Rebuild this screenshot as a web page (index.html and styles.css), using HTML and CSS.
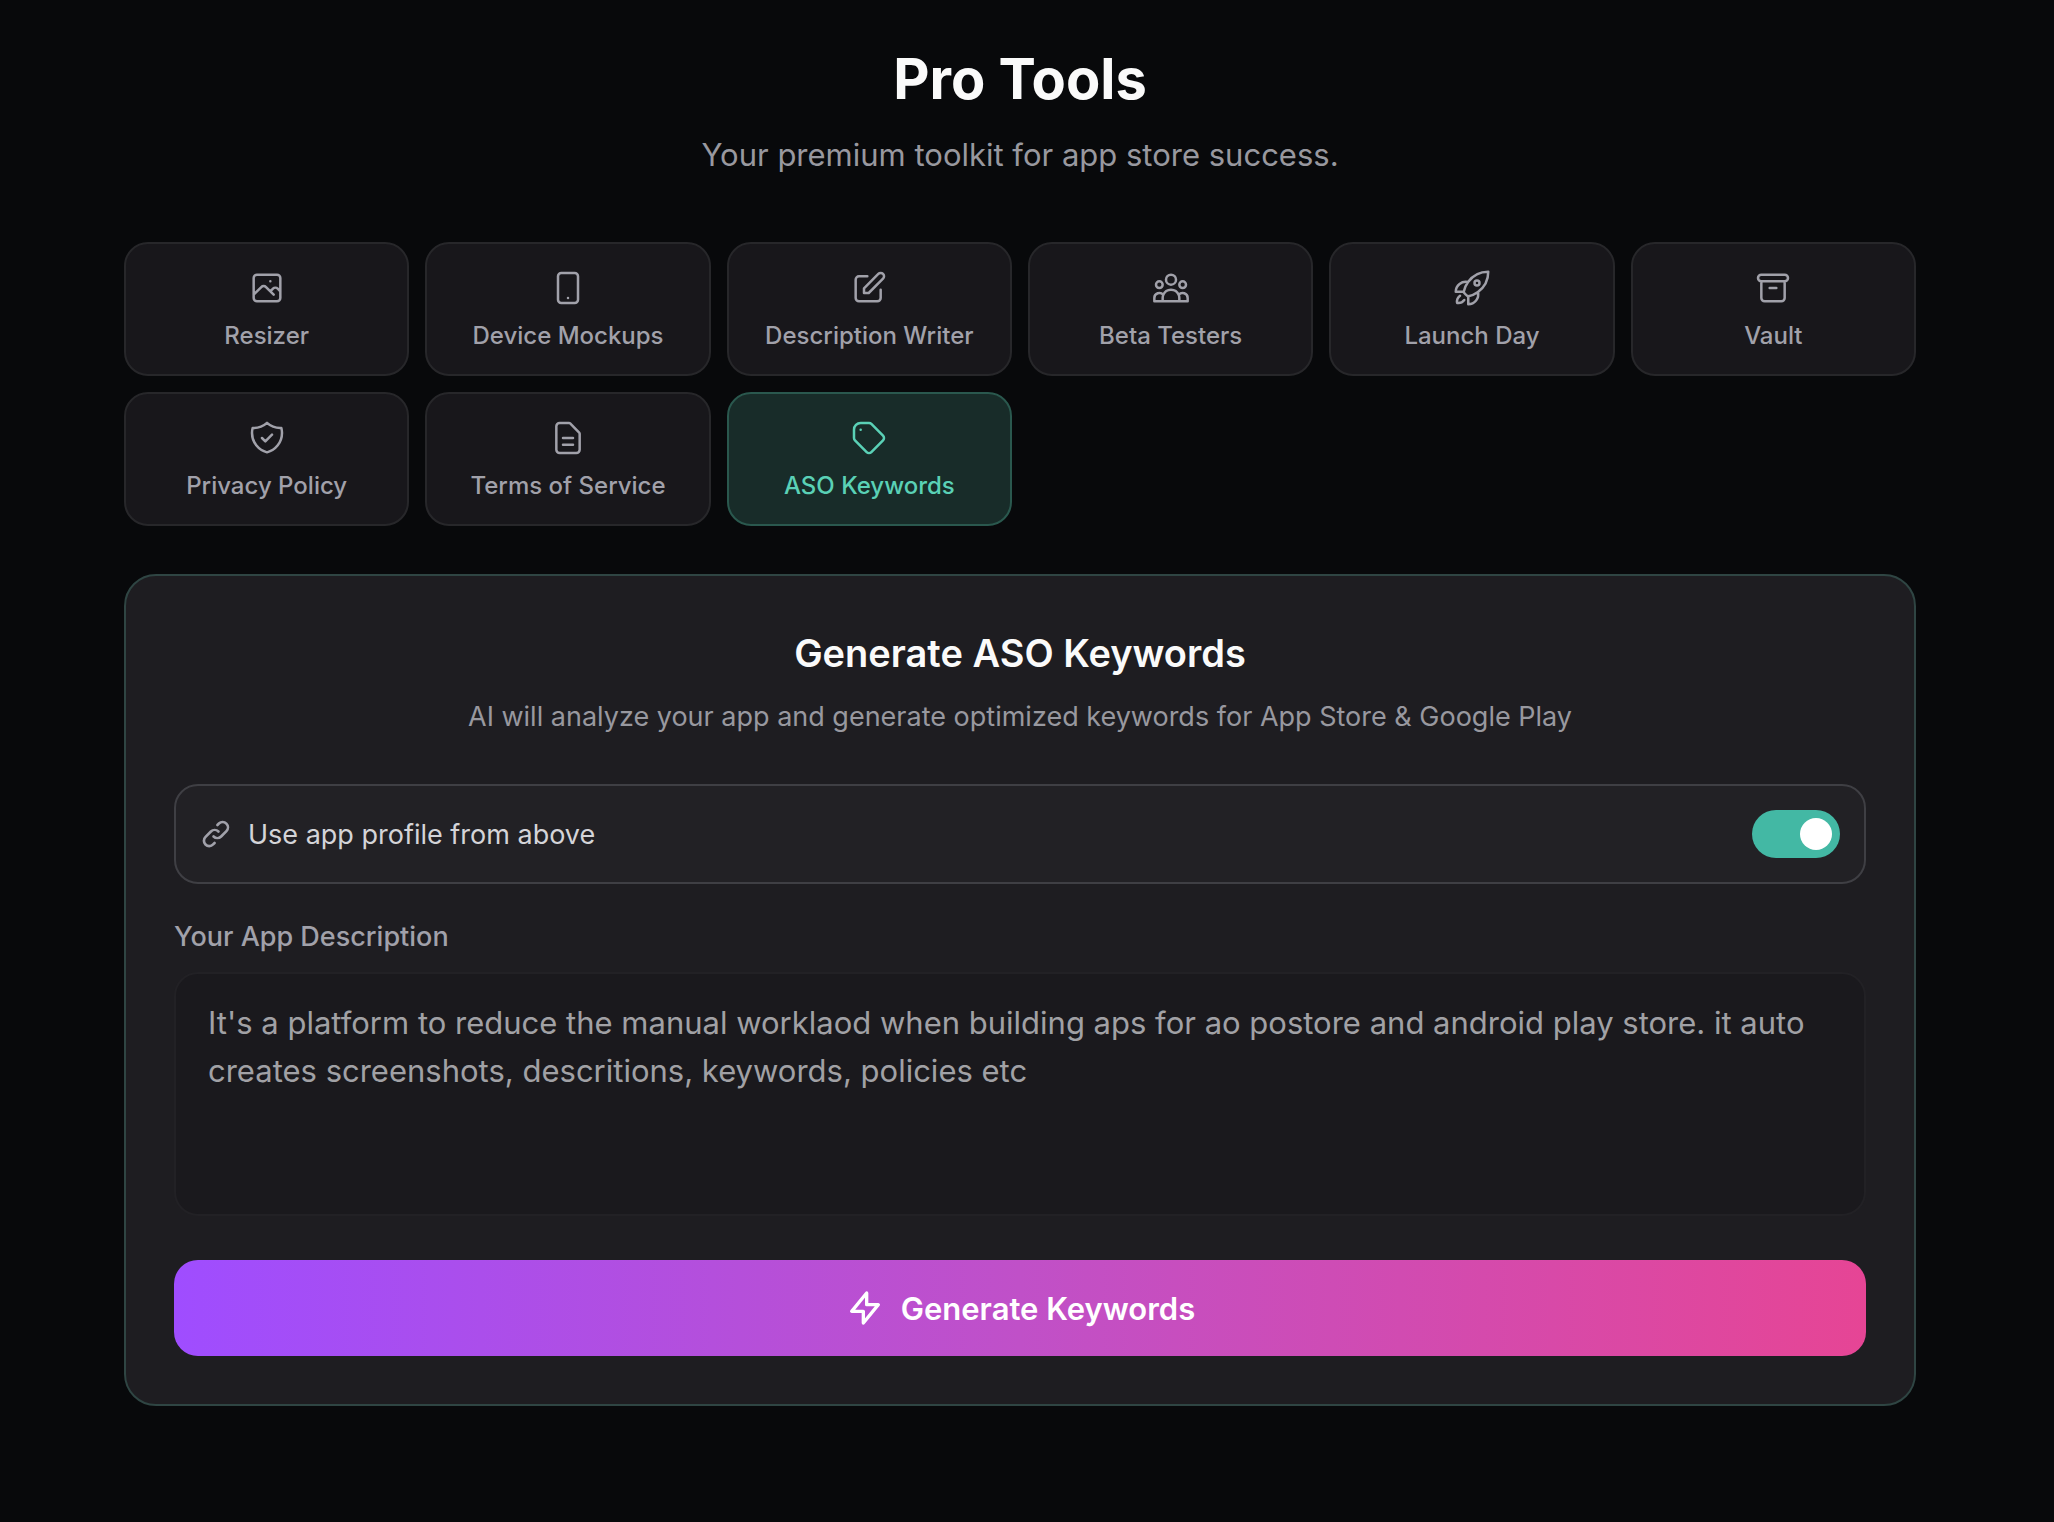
FILE: index.html
```
<!DOCTYPE html>
<html lang="en">
<head>
<meta charset="utf-8">
<meta name="viewport" content="width=device-width, initial-scale=1">
<title>Pro Tools</title>
<link rel="stylesheet" href="styles.css">
</head>
<body>
<main class="page">
  <header class="page-header">
    <h1 class="page-title">Pro Tools</h1>
    <p class="page-subtitle">Your premium toolkit for app store success.</p>
  </header>

  <nav class="tools" aria-label="Tools">
    <button class="tool" type="button">
      <svg class="icon" viewBox="0 0 24 24" aria-hidden="true"><path d="M4 16l4.586-4.586a2 2 0 012.828 0L16 16m-2-2l1.586-1.586a2 2 0 012.828 0L20 14m-6-6h.01M6 20h12a2 2 0 002-2V6a2 2 0 00-2-2H6a2 2 0 00-2 2v12a2 2 0 002 2z"/></svg>
      <span>Resizer</span>
    </button>
    <button class="tool" type="button">
      <svg class="icon" viewBox="0 0 24 24" aria-hidden="true"><path d="M12 18h.01M8 21h8a2 2 0 002-2V5a2 2 0 00-2-2H8a2 2 0 00-2 2v14a2 2 0 002 2z"/></svg>
      <span>Device Mockups</span>
    </button>
    <button class="tool" type="button">
      <svg class="icon" viewBox="0 0 24 24" aria-hidden="true"><path d="M11 5H6a2 2 0 00-2 2v11a2 2 0 002 2h11a2 2 0 002-2v-5m-1.414-9.414a2 2 0 112.828 2.828L11.828 15H9v-2.828l8.586-8.586z"/></svg>
      <span>Description Writer</span>
    </button>
    <button class="tool" type="button">
      <svg class="icon" viewBox="0 0 24 24" aria-hidden="true"><path d="M17 20h5v-2a3 3 0 00-5.356-1.857M17 20H7m10 0v-2c0-.656-.126-1.283-.356-1.857M7 20H2v-2a3 3 0 015.356-1.857M7 20v-2c0-.656.126-1.283.356-1.857m0 0a5.002 5.002 0 019.288 0M15 7a3 3 0 11-6 0 3 3 0 016 0zm6 3a2 2 0 11-4 0 2 2 0 014 0zM7 10a2 2 0 11-4 0 2 2 0 014 0z"/></svg>
      <span>Beta Testers</span>
    </button>
    <button class="tool" type="button">
      <svg class="icon" viewBox="0 0 24 24" aria-hidden="true"><path d="M15.59 14.37a6 6 0 0 1-5.84 7.38v-4.8m5.84-2.58a14.98 14.98 0 0 0 6.16-12.12A14.98 14.98 0 0 0 9.631 8.41m5.96 5.96a14.926 14.926 0 0 1-5.841 2.58m-.119-8.54a6 6 0 0 0-7.381 5.84h4.8m2.581-5.84a14.927 14.927 0 0 0-2.58 5.84m2.699 2.7c-.103.021-.207.041-.311.06a15.09 15.09 0 0 1-2.448-2.448 14.9 14.9 0 0 1 .06-.312m-2.24 2.39a4.493 4.493 0 0 0-1.757 4.306 4.493 4.493 0 0 0 4.306-1.758M16.5 9a1.5 1.5 0 1 1-3 0 1.5 1.5 0 0 1 3 0Z"/></svg>
      <span>Launch Day</span>
    </button>
    <button class="tool" type="button">
      <svg class="icon" viewBox="0 0 24 24" aria-hidden="true"><path d="M5 8h14M5 8a2 2 0 110-4h14a2 2 0 110 4M5 8v10a2 2 0 002 2h10a2 2 0 002-2V8m-9 4h4"/></svg>
      <span>Vault</span>
    </button>
    <button class="tool" type="button">
      <svg class="icon" viewBox="0 0 24 24" aria-hidden="true"><path d="M9 12l2 2 4-4m5.618-4.016A11.955 11.955 0 0112 2.944a11.955 11.955 0 01-8.618 3.04A12.02 12.02 0 003 9c0 5.591 3.824 10.29 9 11.622 5.176-1.332 9-6.03 9-11.622 0-1.042-.133-2.052-.382-3.016z"/></svg>
      <span>Privacy Policy</span>
    </button>
    <button class="tool" type="button">
      <svg class="icon" viewBox="0 0 24 24" aria-hidden="true"><path d="M9 12h6m-6 4h6m2 5H7a2 2 0 01-2-2V5a2 2 0 012-2h5.586a1 1 0 01.707.293l5.414 5.414a1 1 0 01.293.707V19a2 2 0 01-2 2z"/></svg>
      <span>Terms of Service</span>
    </button>
    <button class="tool tool-active" type="button" aria-current="page">
      <svg class="icon" viewBox="0 0 24 24" aria-hidden="true"><path d="M7 7h.01M7 3h5c.512 0 1.024.195 1.414.586l7 7a2 2 0 010 2.828l-7 7a2 2 0 01-2.828 0l-7-7A1.994 1.994 0 013 12V7a4 4 0 014-4z"/></svg>
      <span>ASO Keywords</span>
    </button>
  </nav>

  <form class="panel">
    <h2 class="panel-title">Generate ASO Keywords</h2>
    <p class="panel-text">AI will analyze your app and generate optimized keywords for App Store &amp; Google Play</p>

    <div class="profile">
      <svg class="icon icon-small icon-bold" viewBox="0 0 24 24" aria-hidden="true"><path d="M13.828 10.172a4 4 0 00-5.656 0l-4 4a4 4 0 105.656 5.656l1.102-1.101m-.758-4.899a4 4 0 005.656 0l4-4a4 4 0 00-5.656-5.656l-1.1 1.1"/></svg>
      <label class="profile-label" for="use-profile">Use app profile from above</label>
      <input class="switch" type="checkbox" role="switch" id="use-profile" checked>
    </div>

    <label class="field-label" for="description">Your App Description</label>
    <textarea class="field" id="description" rows="4" spellcheck="false">It's a platform to reduce the manual worklaod when building aps for ao postore and android play store. it auto creates screenshots, descritions, keywords, policies etc</textarea>

    <button class="submit" type="button">
      <svg class="icon icon-bold" viewBox="0 0 24 24" aria-hidden="true"><path d="M13 10V3L4 14h7v7l9-11h-7z"/></svg>
      <span class="submit-label">Generate Keywords</span>
    </button>
  </form>
</main>
</body>
</html>
```
FILE: styles.css
```
:root {
  --bg: #08090b;
  --muted: #a1a1aa;
  --accent: #43b8a4;
  --accent-text: #5ad1b6;
}

*, *::before {
  box-sizing: border-box;
}

body {
  margin: 0;
  padding-right: 14px;
  background: var(--bg);
  color: #fafafa;
  font-family: Inter, "Liberation Sans", sans-serif;
}

h1, h2, p {
  margin: 0;
}

button, input, textarea {
  font: inherit;
  color: inherit;
}

.page {
  max-width: 1856px;
  margin: 0 auto;
  padding: 43px 32px 112px;
}

.page-header {
  margin-bottom: 63px;
  text-align: center;
}

.page-title {
  font-size: 56px;
  font-weight: 700;
  line-height: 72px;
}

.page-subtitle {
  margin-top: 16px;
  color: #98989f;
  font-size: 31px;
  line-height: 48px;
}

.icon {
  flex: none;
  width: 40px;
  height: 40px;
  fill: none;
  stroke: currentColor;
  stroke-width: 1.5;
  stroke-linecap: round;
  stroke-linejoin: round;
}

.icon-small {
  width: 32px;
  height: 32px;
}

.icon-bold {
  stroke-width: 2;
}

.tools {
  display: grid;
  grid-template-columns: repeat(6, 1fr);
  gap: 16px;
  margin-bottom: 48px;
}

.tool {
  display: flex;
  flex-direction: column;
  align-items: center;
  gap: 12px;
  padding: 24px 16px 22px;
  border: 2px solid #27272a;
  border-radius: 24px;
  background: #18171b;
  color: var(--muted);
  font-size: 24px;
  font-weight: 500;
  line-height: 32px;
  cursor: pointer;
}

.tool-active {
  border-color: #2a584e;
  background: #182c29;
  color: var(--accent-text);
}

.panel {
  padding: 49px 48px 48px;
  border: 2px solid #2f4543;
  border-radius: 32px;
  background: #1e1d21;
}

.panel-title {
  font-size: 38px;
  font-weight: 600;
  line-height: 56px;
  text-align: center;
}

.panel-text {
  margin: 16px 0 47px;
  color: #98989f;
  font-size: 27px;
  line-height: 40px;
  text-align: center;
}

.profile {
  display: flex;
  align-items: center;
  gap: 16px;
  margin-bottom: 33px;
  padding: 24px;
  border: 2px solid #3f3f44;
  border-radius: 24px;
  background: #222125;
  color: var(--muted);
}

.profile-label {
  flex: 1;
  padding-top: 2px;
  color: #d4d4d8;
  font-size: 27px;
  line-height: 40px;
}

.switch {
  appearance: none;
  flex: none;
  display: flex;
  justify-content: flex-start;
  width: 88px;
  height: 48px;
  margin: 0;
  padding: 8px;
  border-radius: 24px;
  background: #3f3f46;
  cursor: pointer;
}

.switch::before {
  content: "";
  width: 32px;
  height: 32px;
  border-radius: 50%;
  background: #fff;
}

.switch:checked {
  justify-content: flex-end;
  background: var(--accent);
}

.field-label {
  display: block;
  margin-bottom: 15px;
  color: var(--muted);
  font-size: 27px;
  font-weight: 500;
  line-height: 40px;
}

.field {
  display: block;
  width: 100%;
  margin-bottom: 44px;
  padding: 25px 32px 23px;
  border: 2px solid #222125;
  border-radius: 24px;
  background: #1a191d;
  color: #a1a1a5;
  font-size: 31px;
  line-height: 48px;
  resize: none;
}

.submit {
  display: flex;
  align-items: center;
  justify-content: center;
  gap: 16px;
  width: 100%;
  padding: 24px;
  border: 0;
  border-radius: 24px;
  background: linear-gradient(90deg, #9f4dff, #c050c8, #e64595);
  color: #fff;
  font-size: 31px;
  font-weight: 600;
  cursor: pointer;
}

.submit-label {
  padding-top: 2px;
  line-height: 46px;
}

@media (max-width: 1400px) {
  .tools {
    grid-template-columns: repeat(3, 1fr);
  }
}
```
